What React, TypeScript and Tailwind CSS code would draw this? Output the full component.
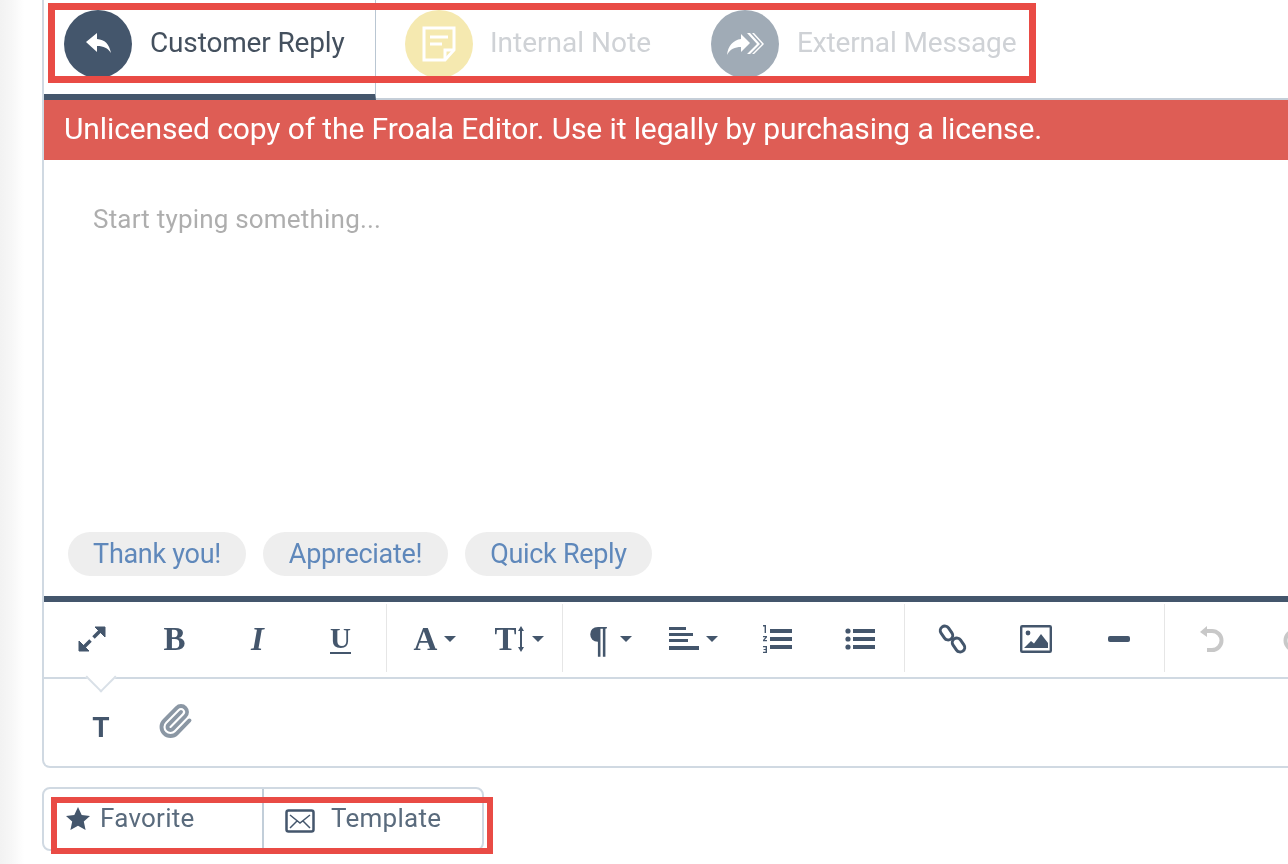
import { Paperclip } from "lucide-react";

const serif = "font-['Liberation_Serif',serif] font-bold text-[#44566c]";

function Caret({ gap = "ml-[7px]" }: { gap?: string }) {
  return <span className={`${gap} h-0 w-0 border-x-[6px] border-t-[6px] border-x-transparent border-t-[#44566c]`} />;
}

function ToolButton({ children, width = "w-[83px]" }: { children: React.ReactNode; width?: string }) {
  return <div className={`flex h-full items-center justify-center pt-[2px] ${width}`}>{children}</div>;
}

function ExpandIcon() {
  return (
    <svg width="28" height="28" viewBox="0 0 28 28" fill="#44566c" stroke="#44566c">
      <path d="M17 2h10v10z" strokeWidth="1" />
      <path d="M11 26H1V16z" strokeWidth="1" />
      <path d="M21.500 6.500L15.500 12.500M6.500 21.500L12.500 15.500" strokeWidth="3.500" />
    </svg>
  );
}

function AlignIcon() {
  return (
    <svg width="30" height="26" viewBox="0 0 30 26" fill="#44566c">
      <rect x="0" y="1" width="17" height="3" />
      <rect x="0" y="7" width="24" height="3" />
      <rect x="0" y="13" width="19" height="3" />
      <rect x="0" y="20" width="30" height="4" />
    </svg>
  );
}

function OrderedIcon() {
  return (
    <svg width="30" height="30" viewBox="0 0 30 30" fill="#44566c">
      <rect x="8" y="5" width="22" height="4" />
      <rect x="8" y="13" width="22" height="4" />
      <rect x="8" y="21" width="22" height="4" />
      <path d="M1 1h3v8H2.600V2.400H1zM1 12h4v1.200L2.600 16H5v1.200H1V16l2.400-2.800H1zM1 22h4v7H1v-1.200h2.600v-1.700H1.600V25h2V23.200H1z" />
    </svg>
  );
}

function BulletIcon() {
  return (
    <svg width="30" height="26" viewBox="0 0 30 26" fill="#44566c">
      <circle cx="3" cy="5" r="2.600" />
      <circle cx="3" cy="13" r="2.600" />
      <circle cx="3" cy="21" r="2.600" />
      <rect x="8" y="3" width="22" height="4" />
      <rect x="8" y="11" width="22" height="4" />
      <rect x="8" y="19" width="22" height="4" />
    </svg>
  );
}

function LinkIcon() {
  return (
    <svg width="30" height="30" viewBox="0 0 30 30" fill="none" stroke="#44566c" strokeWidth="3">
      <rect x="4" y="1.500" width="9" height="15" rx="4.500" transform="rotate(-35 8.500 9)" />
      <rect x="16" y="13.500" width="9" height="15" rx="4.500" transform="rotate(-35 20.500 21)" />
    </svg>
  );
}

function ImageIcon() {
  return (
    <svg width="32" height="28" viewBox="0 0 32 28">
      <rect x="1.200" y="1.200" width="29.600" height="25.600" rx="1" fill="#fff" stroke="#44566c" strokeWidth="2.400" />
      <circle cx="8" cy="8" r="2.400" fill="#44566c" />
      <path d="M4 23l7-7 3 2.500L21 9l7 9v5z" fill="#44566c" />
    </svg>
  );
}

function UndoIcon({ className = "" }: { className?: string }) {
  return (
    <svg width="28" height="30" viewBox="0 0 28 30" fill="none" className={className}>
      <path d="M6 7h8a9.500 9.500 0 0 1 0 19h-5" stroke="#c8c8c8" strokeWidth="4" />
      <path d="M2 8l7-6v11z" fill="#c8c8c8" />
    </svg>
  );
}

export default function App() {
  return (
    <div className="relative flex h-[864px] w-[1288px] overflow-hidden bg-white font-['Roboto',sans-serif] blur-[0.6px]">
      <div className="h-full w-[24px] shrink-0 bg-gradient-to-r from-[#f2f2f2] via-[#f7f7f7] to-white" />
      <div className="ml-[18px] w-[1400px] shrink-0">
        <div className="rounded-b-lg border-x-2 border-b-2 border-[#d0d9e2]">
          {/* message type tabs */}
          <div className="flex h-[100px]">
            <div className="flex h-full w-[332px] gap-[18px] border-r border-b-[6px] border-r-[#b9c6d2] border-b-[#44566c] pt-[10px] pl-[20px]">
              <div className="flex h-[68px] w-[68px] items-center justify-center rounded-full bg-[#44566c]">
                <svg width="30" height="28" viewBox="0 0 30 28" fill="#fff">
                  <path d="M14 3v6c8 .5 12 5 14 14-3.500-5-7-7-14-7v6L3 12z" />
                </svg>
              </div>
              <span className="mt-[14px] text-[28px] leading-[38px] tracking-[-0.15px] text-[#44505e]">Customer Reply</span>
            </div>
            <div className="flex h-full flex-1 border-b-2 border-[#c5ced8] pt-[10px] pl-[29px]">
              <div className="flex h-[68px] w-[68px] items-center justify-center rounded-full bg-[#f5e9b0]">
                <svg width="34" height="36" viewBox="0 0 34 36" fill="none" stroke="#fff" strokeWidth="3">
                  <path d="M2 2h30v22l-9 10H2z" />
                  <path d="M8 11h18M8 18h12" />
                  <path d="M23 34V24h9" />
                </svg>
              </div>
              <span className="mt-[14px] ml-[17px] text-[28px] leading-[38px] tracking-[0px] text-[#cfd2d6]">Internal Note</span>
              <div className="ml-[60px] flex h-[68px] w-[68px] items-center justify-center rounded-full bg-[#a0abb6]">
                <svg width="40" height="30" viewBox="0 0 40 30" fill="#fff">
                  <path d="M16 5l9 9-9 9v-5c-6 0-11 2-14 8 1-9 6-15 14-16z" />
                  <path d="M22 4l10 11-10 10 3 0 10-10L25 4z" />
                  <path d="M27 4l10 11-10 10 2 0 10-10L29 4z" />
                </svg>
              </div>
              <span className="mt-[14px] ml-[18px] text-[28px] leading-[38px] tracking-[-0.15px] text-[#cfd2d6]">External Message</span>
            </div>
          </div>

          <div className="flex h-[60px] items-center bg-[#de5d55] pb-[4px] pl-[20px] text-[30px] tracking-[-0.12px] text-white">
            Unlicensed copy of the Froala Editor. Use it legally by purchasing a license.
          </div>

          <div className="flex h-[436px] flex-col justify-between pt-[42px] pb-[20px]">
            <p className="pl-[49px] text-[26px] leading-[34px] tracking-[0.2px] text-[#aeaeae]">Start typing something...</p>
            <div className="flex gap-[17px] pl-[24px]">
              <span className="flex h-[44px] w-[178px] items-center justify-center rounded-full bg-[#eeeeee] text-[27px] tracking-[-0.3px] text-[#5f88bb]">Thank you!</span>
              <span className="flex h-[44px] w-[185px] items-center justify-center rounded-full bg-[#eeeeee] text-[27px] tracking-[-0.3px] text-[#5f88bb]">Appreciate!</span>
              <span className="flex h-[44px] w-[187px] items-center justify-center rounded-full bg-[#eeeeee] text-[27px] tracking-[-0.3px] text-[#5f88bb]">Quick Reply</span>
            </div>
          </div>

          {/* toolbar */}
          <div className="relative flex h-[83px] border-t-[6px] border-b-2 border-t-[#44566c] border-b-[#d0d9e2]">
            <div className="mt-[2px] flex h-[68px] w-[343px] border-r border-[#e6e6e6] pl-[6px]">
              <ToolButton><ExpandIcon /></ToolButton>
              <ToolButton><span className={`${serif} text-[33px] leading-none`}>B</span></ToolButton>
              <ToolButton><span className={`${serif} text-[33px] leading-none italic`}>I</span></ToolButton>
              <ToolButton><span className={`${serif} border-b-2 border-[#44566c] text-[29px] leading-[28px]`}>U</span></ToolButton>
            </div>
            <div className="mt-[2px] flex h-[68px] w-[176px] border-r border-[#e6e6e6] pl-[6px]">
              <ToolButton width="w-[84px]"><span className={`${serif} text-[33px] leading-none`}>A</span><Caret /></ToolButton>
              <ToolButton width="w-[84px]">
                <span className={`${serif} text-[33px] leading-none`}>T</span>
                <svg width="8" height="28" viewBox="0 0 8 28" fill="#44566c">
                  <path d="M4 1l3 5H5v16h2l-3 5-3-5h2V6H1z" />
                </svg>
                <Caret />
              </ToolButton>
            </div>
            <div className="mt-[2px] flex h-[68px] w-[342px] border-r border-[#e6e6e6] pl-[6px]">
              <ToolButton><span className={`${serif} text-[37px] leading-none`}>¶</span><Caret gap="ml-[12px]" /></ToolButton>
              <ToolButton><AlignIcon /><Caret /></ToolButton>
              <ToolButton><OrderedIcon /></ToolButton>
              <ToolButton><BulletIcon /></ToolButton>
            </div>
            <div className="mt-[2px] flex h-[68px] w-[260px] border-r border-[#e6e6e6] pl-[6px]">
              <ToolButton><LinkIcon /></ToolButton>
              <ToolButton><ImageIcon /></ToolButton>
              <ToolButton><span className="h-[6px] w-[22px] rounded-[2px] bg-[#44566c]" /></ToolButton>
            </div>
            <div className="mt-[2px] flex h-[68px] pl-[5px]">
              <ToolButton><UndoIcon /></ToolButton>
              <ToolButton><UndoIcon className="-scale-x-100" /></ToolButton>
            </div>
            <span className="absolute top-[64px] left-[46px] h-[22px] w-[22px] rotate-45 border-r-2 border-b-2 border-[#d9e0e7] bg-white" />
          </div>

          <div className="flex h-[87px] items-start pt-[30px] pl-[43px]">
            <span className="mt-[1px] w-[28px] text-center text-[28px] leading-[36px] font-bold text-[#44566c]">T</span>
            <Paperclip size={36} strokeWidth={2.600} className="mt-[-6px] ml-[42px] text-[#8b97a4]" />
          </div>
        </div>

        {/* favorite and template */}
        <div className="mt-[19px] flex h-[64px] w-[442px] rounded-lg border-2 border-[#d0d9e2]">
          <div className="flex w-[220px] gap-[9px] border-r-2 border-[#c2ced9] pt-[11px] pl-[21px]">
            <svg width="26" height="26" viewBox="0 0 26 26" fill="#44566c" className="mt-[6px]">
              <path d="M13 1l3.700 8 8.300.9-6.200 5.700 1.800 8.400L13 19.800 5.400 24l1.800-8.400L1 9.900 9.300 9z" />
            </svg>
            <span className="text-[26px] leading-[36px] tracking-[0.25px] text-[#5a6b7d]">Favorite</span>
          </div>
          <div className="flex flex-1 gap-[16px] pt-[11px] pl-[21px]">
            <svg width="30" height="24" viewBox="0 0 30 24" fill="none" stroke="#44566c" strokeWidth="2.500" className="mt-[9px]">
              <rect x="1.500" y="1.500" width="27" height="21" rx="2" />
              <path d="M5 6l10 8 10-8M5 19l7-7M25 19l-7-7" strokeWidth="1.500" />
            </svg>
            <span className="text-[26px] leading-[36px] tracking-[0.25px] text-[#5a6b7d]">Template</span>
          </div>
        </div>
      </div>

      {/* annotation boxes laid over the screenshot */}
      <div className="absolute top-[3px] left-[48px] h-[80px] w-[988px] border-[7px] border-[#e94b45]" />
      <div className="absolute top-[797px] left-[51px] h-[57px] w-[442px] border-[6px] border-[#e94b45]" />
    </div>
  );
}
